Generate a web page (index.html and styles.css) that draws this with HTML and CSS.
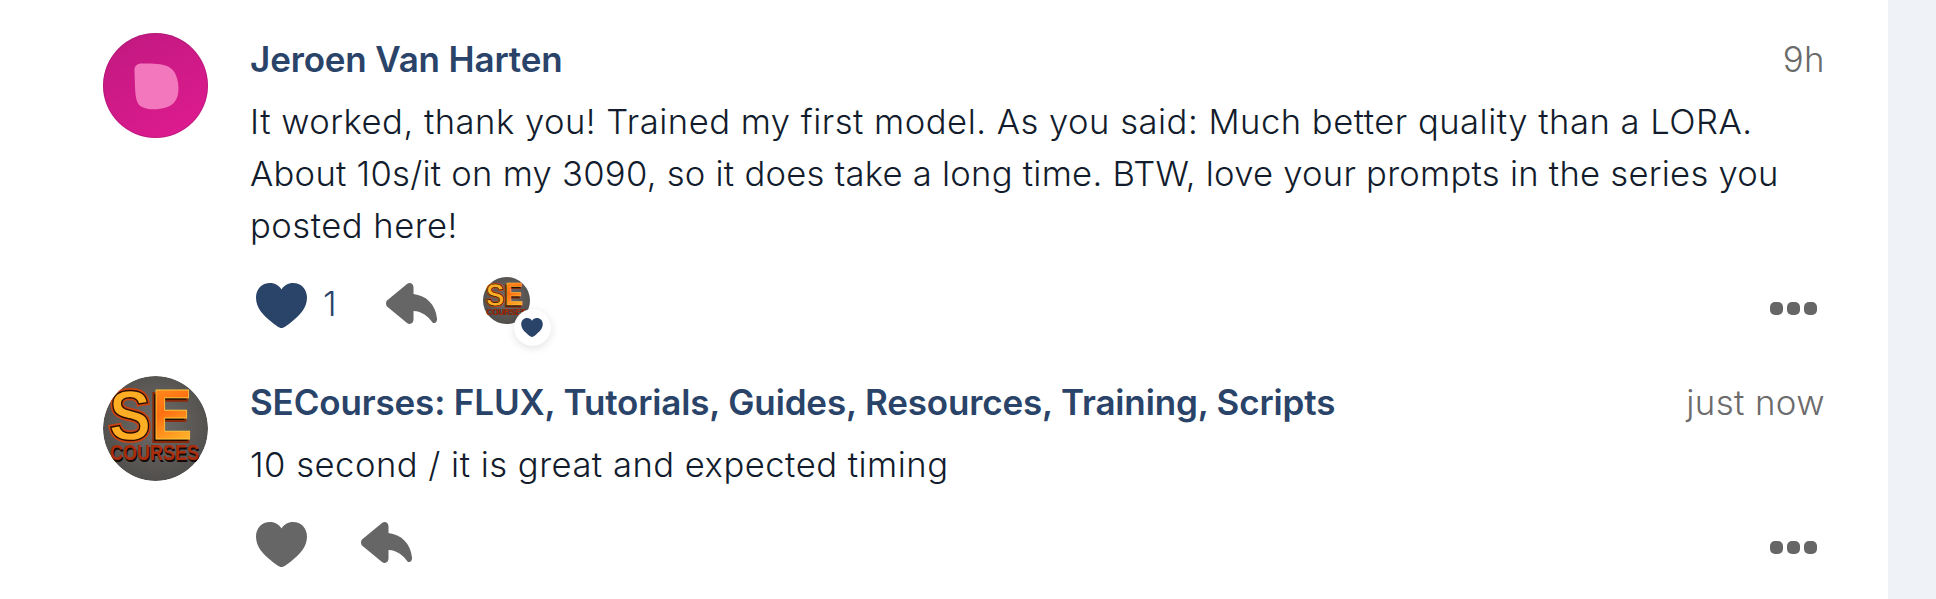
FILE: index.html
```html
<!DOCTYPE html>
<html lang="en">
<head>
<meta charset="utf-8">
<title>Comments</title>
<link rel="stylesheet" href="styles.css">
</head>
<body>
<svg class="defs" width="0" height="0" aria-hidden="true">
  <defs>
    <symbol id="heart" viewBox="0 0 51 45"><path d="M25.5 45C23 45 20 42.500 15 38.500C7 32 0 25 0 14.500C0 6 6 0 14 0C19 0 23 2.500 25.500 6.500C28 2.500 32 0 37 0C45 0 51 6 51 14.500C51 25 44 32 36 38.500C31 42.500 28 45 25.500 45Z"/></symbol>
    <symbol id="reply" viewBox="0 0 51 41"><path d="M1 17.500L21 1C24 -1 27.500 0.500 27.500 4.500V11C40 12.500 49.500 21 51 35.500C51.300 39 49 41 46.500 39.500C42 33 36 28.500 27.500 28V36.500C27.500 40.500 24 42 21 40L1 23.500C-0.300 22 -0.300 19 1 17.500Z"/></symbol>
    <linearGradient id="fire" x1="0" y1="0" x2="0.3" y2="1">
      <stop offset="0" stop-color="#ff9a22"/><stop offset="0.5" stop-color="#ff6f12"/><stop offset="1" stop-color="#ffb52a"/>
    </linearGradient>
    <radialGradient id="stone" cx="0.5" cy="0.45" r="0.6">
      <stop offset="0" stop-color="#6f6c69"/><stop offset="1" stop-color="#4e4c4a"/>
    </radialGradient>
    <symbol id="se-logo" viewBox="0 0 105 105">
      <circle cx="52.500" cy="52.500" r="52.500" fill="url(#stone)"/>
      <text class="logo-ring" x="6" y="64" textLength="42" lengthAdjust="spacingAndGlyphs">S</text>
      <text class="logo-core" x="6" y="64" textLength="42" lengthAdjust="spacingAndGlyphs">S</text>
      <text class="logo-shadow" x="46" y="66" textLength="42" lengthAdjust="spacingAndGlyphs">E</text>
      <text class="logo-big" x="49" y="63" textLength="40" lengthAdjust="spacingAndGlyphs">E</text>
      <text class="logo-small-shadow" x="8" y="86" textLength="89" lengthAdjust="spacingAndGlyphs">COURSES</text>
      <text class="logo-small" x="7" y="84" textLength="89" lengthAdjust="spacingAndGlyphs">COURSES</text>
    </symbol>
  </defs>
</svg>
<main class="panel">
  <article class="post post-first">
    <div class="avatar avatar-pink">
      <svg class="blob" viewBox="0 0 45 47"><path d="M0.5 8C0 3 3 .5 8 .5C20 .5 28 .5 35 4C42 8 44.500 17 44.500 26C44.500 36 40 42 32 44.500C24 47 14 47 8 44C2 41 1.500 33 1 24Z"/></svg>
    </div>
    <div class="content">
      <header class="post-head">
        <a class="author">Jeroen Van Harten</a>
        <span class="time">9h</span>
      </header>
      <p class="text">It worked, thank you! Trained my first model. As you said: Much better quality than a LORA. <span class="tight">About 10s/it on my 3090, so it does take a long time. BTW, love your prompts in the series you</span> posted here!</p>
      <footer class="actions">
        <svg class="icon-heart liked"><use href="#heart"/></svg>
        <span class="count">1</span>
        <svg class="icon-reply reply-first"><use href="#reply"/></svg>
        <span class="liker">
          <svg class="liker-avatar"><use href="#se-logo"/></svg>
          <span class="badge"><svg class="badge-heart"><use href="#heart"/></svg></span>
        </span>
        <span class="more"><i></i><i></i><i></i></span>
      </footer>
    </div>
  </article>
  <article class="post post-second">
    <svg class="avatar"><use href="#se-logo"/></svg>
    <div class="content">
      <header class="post-head">
        <a class="author">SECourses: FLUX, Tutorials, Guides, Resources, Training, Scripts</a>
        <span class="time">just now</span>
      </header>
      <p class="text">10 second / it is great and expected timing</p>
      <footer class="actions">
        <svg class="icon-heart"><use href="#heart"/></svg>
        <svg class="icon-reply reply-second"><use href="#reply"/></svg>
        <span class="more"><i></i><i></i><i></i></span>
      </footer>
    </div>
  </article>
</main>
</body>
</html>
```

FILE: styles.css
```css
* { box-sizing: border-box; }
html, body { margin: 0; height: 100%; }
body {
  background: #eff3f8;
  font-family: Inter, "Liberation Sans", sans-serif;
  overflow: hidden;
}
.defs { position: absolute; }
.panel {
  width: 1888px;
  height: 599px;
  background: #fff;
  padding: 33px 63px 0 103px;
}
.post { display: flex; gap: 42px; align-items: flex-start; }
.post-second { margin-top: 45px; }
.avatar {
  flex: none;
  width: 105px;
  height: 105px;
  border-radius: 50%;
}
.avatar-pink {
  background: linear-gradient(150deg, #c0197f, #e01b90);
  display: flex;
  align-items: center;
  justify-content: center;
  box-shadow: inset 0 0 0 1px rgba(120, 20, 90, .25);
}
.blob { width: 45px; height: 47px; margin-left: 2px; margin-top: 1px; fill: #f277bd; }
.content { flex: 1; min-width: 0; }
.post-head {
  display: flex;
  justify-content: space-between;
  align-items: baseline;
  line-height: 52px;
}
.author {
  font-size: 35px;
  font-weight: 600;
  color: #2a4369;
  letter-spacing: -0.15px;
}
.time { font-size: 34.8px; color: #6b6b6b; font-weight: 350; letter-spacing: .4px; }
.text {
  margin: 10px 0 0;
  font-size: 34.6px;
  font-weight: 350;
  letter-spacing: .5px;
  line-height: 52px;
  color: #121c2c;
}
.tight { letter-spacing: .26px; }
.actions {
  display: flex;
  align-items: center;
  height: 52px;
  margin-top: 28px;
  padding-left: 6px;
  position: relative;
}
.icon-heart { width: 51px; height: 45px; fill: #666; flex: none; }
.icon-heart.liked { fill: #2a4369; }
.count { font-size: 34.6px; font-weight: 350; color: #2a4369; margin-left: 16px; margin-top: -4px; }
.icon-reply { width: 51px; height: 41px; fill: #666; flex: none; }
.reply-first { margin-left: 49px; margin-top: -4px; }
.reply-second { margin-left: 54px; margin-top: -3px; }
.liker { position: relative; width: 47px; height: 47px; margin-left: 46px; margin-top: -10px; }
.liker-avatar { width: 47px; height: 47px; display: block; }
.badge {
  position: absolute;
  left: 31px;
  top: 32px;
  width: 37px;
  height: 37px;
  border-radius: 50%;
  background: #fff;
  box-shadow: 0 2px 8px rgba(0, 0, 0, .12);
  display: flex;
  align-items: center;
  justify-content: center;
}
.badge-heart { width: 22px; height: 19px; fill: #2a4369; }
.more { margin-left: auto; margin-right: 8px; display: flex; gap: 4px; margin-top: 6px; }
.more i { width: 13px; height: 13px; border-radius: 5px; background: #666; display: block; }
.logo-big, .logo-shadow, .logo-ring, .logo-core {
  font-family: "Liberation Sans", sans-serif;
  font-weight: 700;
  font-size: 70px;
}
.logo-ring { fill: #1c0a05; stroke: #c9420f; stroke-width: 5px; }
.logo-core { fill: #ffae24; stroke: #2a0d05; stroke-width: 1.5px; }
.logo-big { fill: url(#fire); stroke: #ffc23a; stroke-width: 1px; }
.logo-shadow { fill: #1b0d08; stroke: #8a2a0a; stroke-width: 2px; }
.logo-small, .logo-small-shadow {
  font-family: "Liberation Sans", sans-serif;
  font-weight: 700;
  font-size: 22px;
}
.logo-small { fill: #a92c0b; }
.logo-small-shadow { fill: #120805; }
```
